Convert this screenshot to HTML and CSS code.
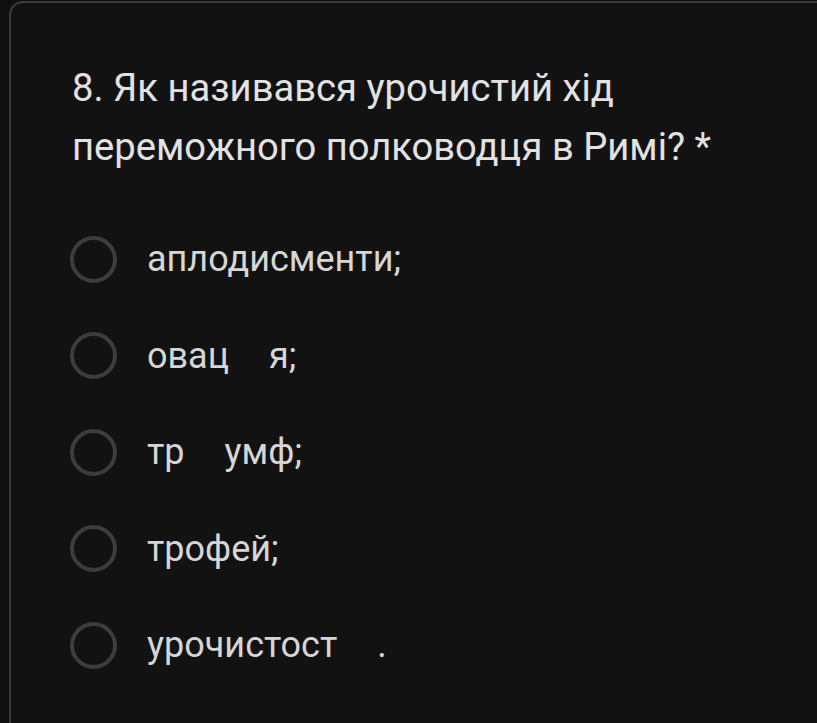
FILE: index.html
```html
<!DOCTYPE html>
<html lang="uk">
<head>
<meta charset="utf-8">
<link rel="stylesheet" href="styles.css">
</head>
<body>
<div class="card">
  <div class="title">8. Як називався урочистий хід переможного полководця в Римі? *</div>
  <div class="options">
    <div class="option"><span class="radio"></span><span class="label">аплодисменти;</span></div>
    <div class="option"><span class="radio"></span><span class="label">овац<span class="gap"></span>я;</span></div>
    <div class="option"><span class="radio"></span><span class="label">тр<span class="gap"></span>умф;</span></div>
    <div class="option"><span class="radio"></span><span class="label">трофей;</span></div>
    <div class="option"><span class="radio"></span><span class="label">урочистост<span class="gap"></span>.</span></div>
  </div>
</div>
</body>
</html>
```

FILE: styles.css
```css
html, body {
  margin: 0;
  padding: 0;
  background: #0f0f0f;
  overflow: hidden;
  height: 723px;
}
.card {
  margin: 1px 0 0 9px;
  width: 860px;
  height: 760px;
  box-sizing: border-box;
  background: #121212;
  border: 2px solid #3a3a3a;
  border-radius: 14px 0 0 0;
  padding: 56px 0 0 61px;
}
.title {
  font-family: Roboto, "Open Sans", sans-serif;
  font-size: 38.2px;
  line-height: 59px;
  color: #e2e2e2;
  width: 680px;
}
.options {
  margin-top: 58px;
  display: flex;
  flex-direction: column;
  gap: 48.5px;
}
.option {
  display: flex;
  align-items: center;
  height: 48px;
}
.radio {
  width: 39px;
  height: 39px;
  border: 4px solid #3d3d3d;
  border-radius: 50%;
  flex: none;
  margin-left: -2px;
}
.label {
  margin-left: 30px;
  font-family: Roboto, "Noto Sans", sans-serif;
  font-size: 36px;
  color: #d6d6d6;
}
.gap {
  display: inline-block;
  width: 40px;
}
```
